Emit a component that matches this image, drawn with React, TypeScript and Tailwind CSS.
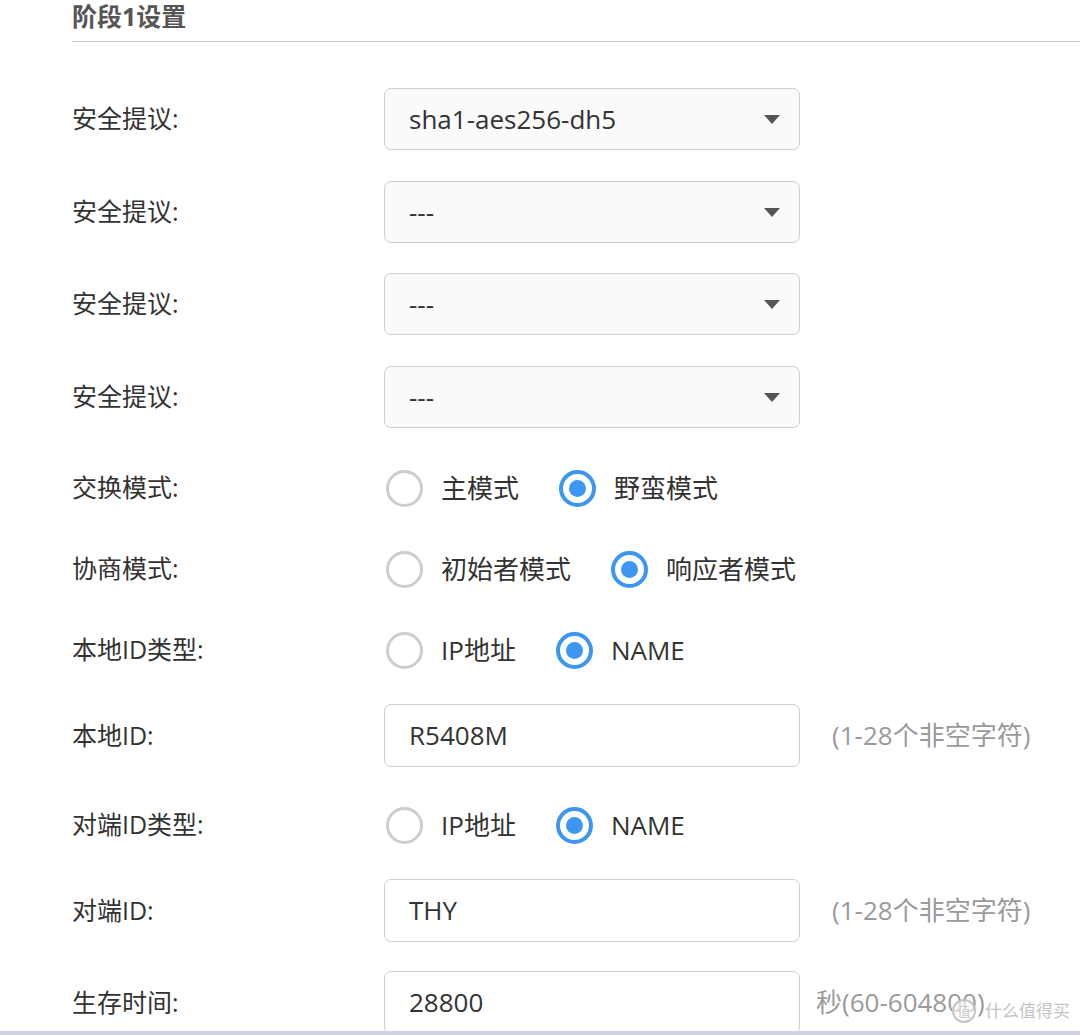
import React from "react";

const FONT = { fontFamily: '"Segoe UI", "Open Sans", "Noto Sans CJK SC", sans-serif' };

function Label({ children }: { children: React.ReactNode }) {
  return <div className="w-[312px] shrink-0 text-[25px] text-[#333]">{children}</div>;
}

function Select({ value }: { value: string }) {
  return (
    <div className="flex h-[62px] w-[416px] items-center justify-between rounded-[7px] border border-[#cfcfcf] bg-[#fafafa] pl-[24px] pr-[18px] text-[26px] text-[#333]">
      <span>{value}</span>
      <svg width="18" height="11" viewBox="0 0 18 11">
        <path d="M1 1 H17 L9 10 Z" fill="#555" />
      </svg>
    </div>
  );
}

function Input({ value }: { value: string }) {
  return (
    <div className="flex h-[63px] w-[416px] items-center rounded-[7px] border border-[#cfcfcf] bg-white pl-[24px] text-[26px] text-[#333]">
      {value}
    </div>
  );
}

function Radio({ checked, label }: { checked?: boolean; label: string }) {
  return (
    <div className="flex items-center">
      {checked ? (
        <span className="flex h-[37px] w-[37px] items-center justify-center rounded-full border-[4px] border-[#3d97f2] bg-white">
          <span className="h-[17px] w-[17px] rounded-full bg-[#3d97f2]" />
        </span>
      ) : (
        <span className="h-[37px] w-[37px] rounded-full border-[3px] border-[#cdcdcd] bg-white" />
      )}
      <span className="ml-[18px] text-[26px] text-[#333]">{label}</span>
    </div>
  );
}

function Hint({ children }: { children: React.ReactNode }) {
  return <span className="ml-[32px] text-[26px] text-[#9a9a9a]">{children}</span>;
}

export default function App() {
  return (
    <div className="relative h-[1035px] w-[1080px] overflow-hidden bg-white" style={FONT}>
      <div className="pl-[72px]">
        <div className="flex h-[42px] items-start border-b border-[#cccccc] text-[25px] font-bold leading-[32px] text-[#555]">
          阶段1设置
        </div>

        <div className="mt-[46px] flex items-center">
          <Label>安全提议:</Label>
          <Select value="sha1-aes256-dh5" />
        </div>
        <div className="mt-[31px] flex items-center">
          <Label>安全提议:</Label>
          <Select value="---" />
        </div>
        <div className="mt-[30px] flex items-center">
          <Label>安全提议:</Label>
          <Select value="---" />
        </div>
        <div className="mt-[31px] flex items-center">
          <Label>安全提议:</Label>
          <Select value="---" />
        </div>

        <div className="mt-[40px] flex h-[40px] items-center">
          <Label>交换模式:</Label>
          <div className="flex items-center gap-[40px] pl-[2px]">
            <Radio label="主模式" />
            <Radio checked label="野蛮模式" />
          </div>
        </div>
        <div className="mt-[41px] flex h-[40px] items-center">
          <Label>协商模式:</Label>
          <div className="flex items-center gap-[40px] pl-[2px]">
            <Radio label="初始者模式" />
            <Radio checked label="响应者模式" />
          </div>
        </div>
        <div className="mt-[41px] flex h-[40px] items-center">
          <Label>本地ID类型:</Label>
          <div className="flex items-center gap-[40px] pl-[2px]">
            <Radio label="IP地址" />
            <Radio checked label="NAME" />
          </div>
        </div>

        <div className="mt-[34px] flex items-center">
          <Label>本地ID:</Label>
          <Input value="R5408M" />
          <Hint>(1-28个非空字符)</Hint>
        </div>

        <div className="mt-[38px] flex h-[40px] items-center">
          <Label>对端ID类型:</Label>
          <div className="flex items-center gap-[40px] pl-[2px]">
            <Radio label="IP地址" />
            <Radio checked label="NAME" />
          </div>
        </div>

        <div className="mt-[34px] flex items-center">
          <Label>对端ID:</Label>
          <Input value="THY" />
          <Hint>(1-28个非空字符)</Hint>
        </div>

        <div className="mt-[29px] flex items-center">
          <Label>生存时间:</Label>
          <Input value="28800" />
          <span className="ml-[16px] text-[26px] text-[#9a9a9a]">秒(60-604800)</span>
        </div>
      </div>

      <div className="absolute bottom-0 left-0 h-[4px] w-full bg-[#cfd0e0]" />

      <div
        className="absolute left-[952px] top-[999px] flex items-center gap-[9px] text-[17px] leading-[24px] text-[#c4c4c4]"
        style={{ textShadow: "0 0 2px #fff, 0 0 2px #fff" }}
      >
        <span className="flex h-[24px] w-[24px] items-center justify-center rounded-full border-[2px] border-[#c4c4c4] bg-white/60 text-[13px] leading-none">
          值
        </span>
        <span>什么值得买</span>
      </div>
    </div>
  );
}
